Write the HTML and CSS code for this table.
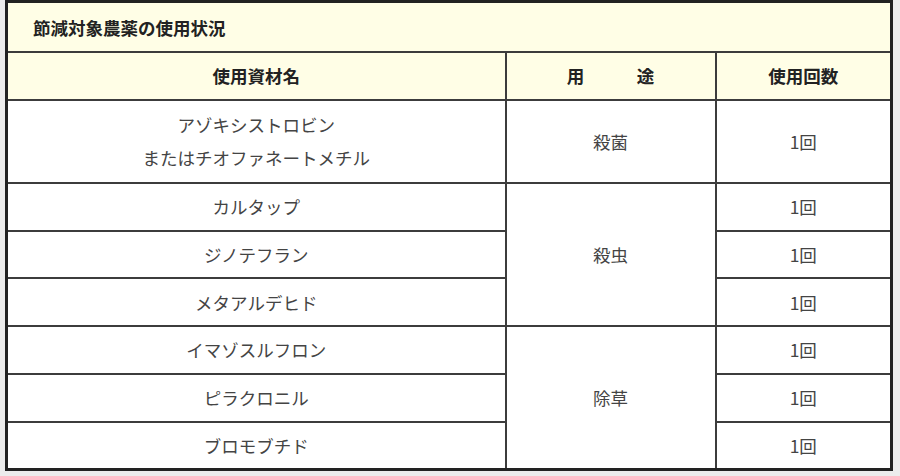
FILE: index.html
```html
<!DOCTYPE html>
<html lang="ja">
<head>
<meta charset="utf-8">
<link rel="stylesheet" href="styles.css">
</head>
<body>
<table class="tbl">
  <colgroup>
    <col class="c1"><col class="c2"><col class="c3">
  </colgroup>
  <tr class="title-row"><th colspan="3" class="title">節減対象農薬の使用状況</th></tr>
  <tr class="head-row"><th>使用資材名</th><th>用　　　途</th><th>使用回数</th></tr>
  <tr class="tall"><td>アゾキシストロビン<br>またはチオファネートメチル</td><td>殺菌</td><td>1回</td></tr>
  <tr><td>カルタップ</td><td rowspan="3">殺虫</td><td>1回</td></tr>
  <tr><td>ジノテフラン</td><td>1回</td></tr>
  <tr><td>メタアルデヒド</td><td>1回</td></tr>
  <tr><td>イマゾスルフロン</td><td rowspan="3">除草</td><td>1回</td></tr>
  <tr><td>ピラクロニル</td><td>1回</td></tr>
  <tr><td>ブロモブチド</td><td>1回</td></tr>
</table>
</body>
</html>
```
FILE: styles.css
```css
html, body {
  margin: 0;
  padding: 0;
  background: #ececec;
}
body {
  padding: 0 7px 0 5px;
  font-family: "Noto Sans CJK JP", "Noto Sans", sans-serif;
  color: #444;
}
.tbl {
  width: 888px;
  border-collapse: collapse;
  border: 3px solid #222;
  background: #fff;
  font-size: 17.5px;
}
.c1 { width: 499px; }
.c2 { width: 210px; }
.tbl th, .tbl td {
  border: 2px solid #3c3c3c;
  text-align: center;
  vertical-align: middle;
  padding: 0;
  height: 45.75px;
  line-height: 33px;
}
.tbl th {
  background: #fffee6;
  color: #222;
  font-weight: bold;
}
.title-row .title {
  text-align: left;
  padding-left: 25px;
  height: 48px;
  font-weight: bold;
}
.tall td {
  height: 81px;
}
```
